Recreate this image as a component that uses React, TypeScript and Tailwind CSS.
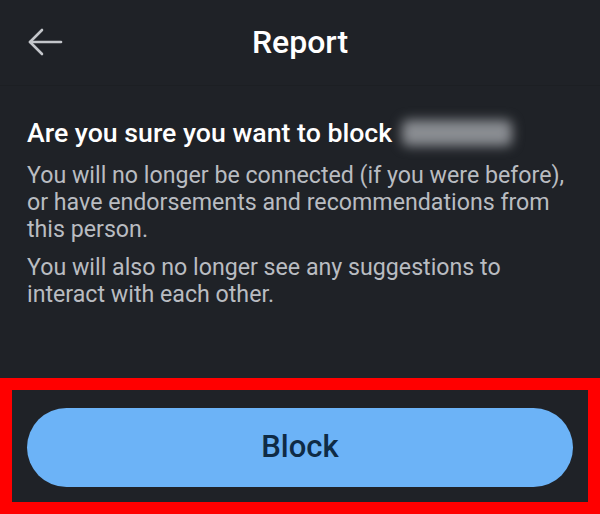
import React from "react";

const font = { fontFamily: "Roboto, 'Noto Sans', sans-serif" };

export default function App() {
  return (
    <div className="w-[600px] h-[514px] bg-[#1f2227] flex flex-col" style={font}>
      <header className="h-[86px] relative flex items-center justify-center border-b border-[#1c1f23]">
        <button className="absolute left-[27px] top-[27px] text-[#c3c6ca]">
          <svg width="36" height="30" viewBox="0 0 36 30" fill="none" stroke="currentColor" strokeWidth="2.6" strokeLinecap="round" strokeLinejoin="round">
            <path d="M34 15H3" />
            <path d="M15 3 3 15l12 12" />
          </svg>
        </button>
        <h1 className="text-white text-[32px] font-medium -mt-[2px]">Report</h1>
      </header>

      <div className="px-[27px] pt-[31px]">
        <div className="flex items-center">
          <span className="text-white text-[26.7px] font-medium leading-[32px]">Are you sure you want to block</span>
          <span className="ml-[10px] w-[110px] h-[26px] rounded-md bg-[#8a8d92] blur-[6px]" />
        </div>
        <p className="text-[#b9bcc1] text-[23.2px] leading-[27px] mt-[13px]">
          You will no longer be connected (if you were before), or have endorsements and recommendations from this person.
        </p>
        <p className="text-[#b9bcc1] text-[23.2px] leading-[27px] mt-[11px]">
          You will also no longer see any suggestions to interact with each other.
        </p>
      </div>

      <div className="mt-auto border-[12px] border-[#ff0000] h-[136px] px-[15px] pt-[18px] pb-[15px]">
        <button className="w-full h-[79px] rounded-full bg-[#6cb3f7] text-[#0f2b45] text-[31px] font-medium">
          Block
        </button>
      </div>
    </div>
  );
}
